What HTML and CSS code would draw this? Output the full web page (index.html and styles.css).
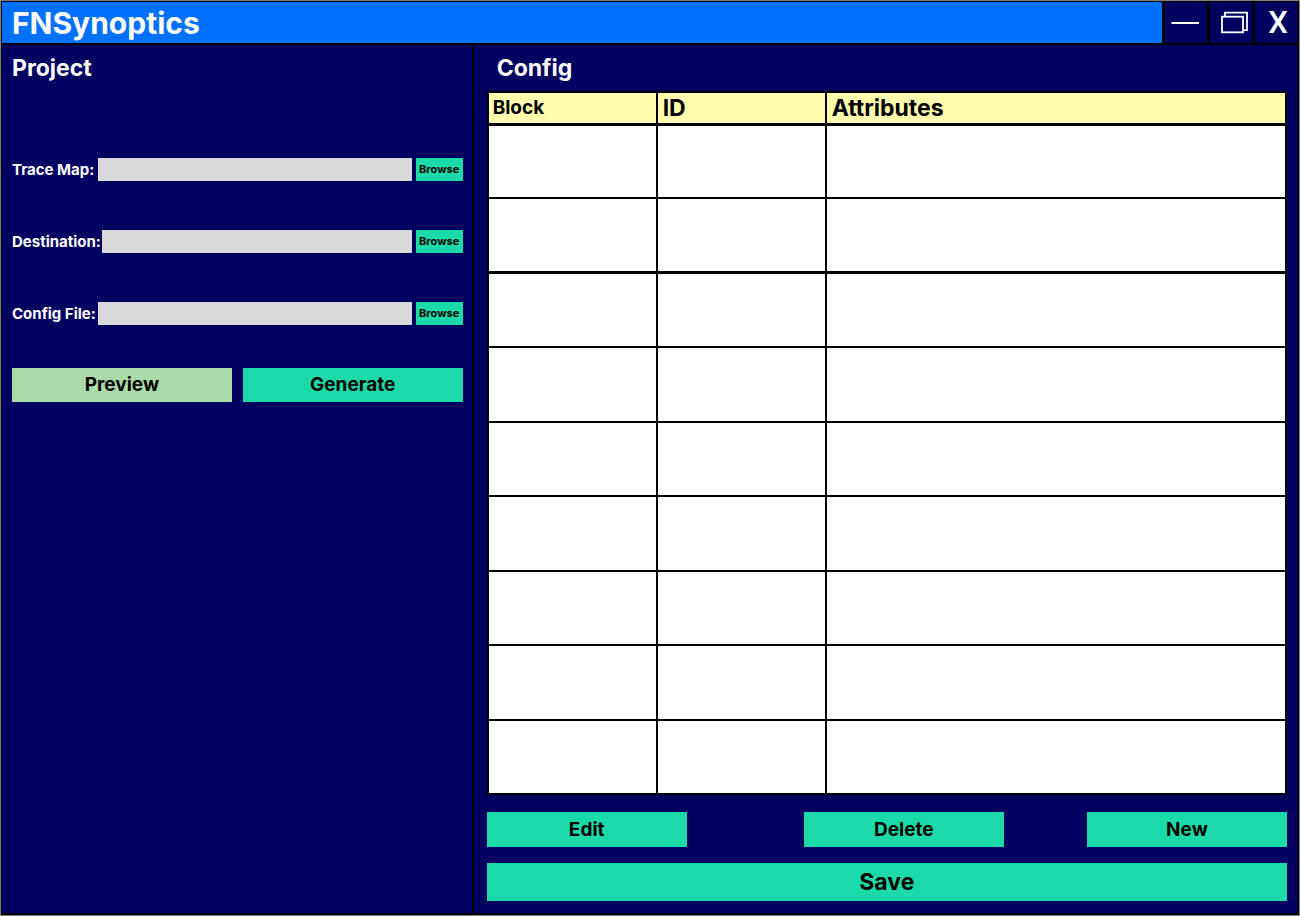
FILE: index.html
```html
<!DOCTYPE html>
<html lang="en">
<head>
<meta charset="utf-8">
<title>FNSynoptics</title>
<link rel="stylesheet" href="styles.css">
</head>
<body>
<div class="window">
  <header class="titlebar">
    <h1 class="app-title">FNSynoptics</h1>
    <button class="win-btn" type="button" aria-label="Minimize">
      <svg width="42" height="42" viewBox="0 0 42 42"><path d="M6.500 21H34" stroke="#fff" stroke-width="2"/></svg>
    </button>
    <button class="win-btn" type="button" aria-label="Restore">
      <svg width="42" height="42" viewBox="0 0 42 42" fill="none" stroke="#fff" stroke-width="1.800"><rect x="12" y="14.700" width="21" height="15.600"/><path d="M15 14.700V10.700H37V28.200H33"/></svg>
    </button>
    <button class="win-btn close" type="button">X</button>
  </header>
  <main class="panes">
    <section class="project">
      <h2 class="heading">Project</h2>
      <form class="form">
        <div class="field">
          <label for="trace">Trace Map:</label>
          <input id="trace" type="text">
          <button class="btn browse" type="button">Browse</button>
        </div>
        <div class="field">
          <label for="dest">Destination:</label>
          <input id="dest" type="text">
          <button class="btn browse" type="button">Browse</button>
        </div>
        <div class="field">
          <label for="config">Config File:</label>
          <input id="config" type="text">
          <button class="btn browse" type="button">Browse</button>
        </div>
        <div class="actions">
          <button class="btn preview" type="button">Preview</button>
          <button class="btn" type="button">Generate</button>
        </div>
      </form>
    </section>
    <section class="config">
      <h2 class="heading config-heading">Config</h2>
      <div class="table-area">
        <table class="blocks">
          <thead><tr><th class="block-col">Block</th><th class="id-col">ID</th><th>Attributes</th></tr></thead>
          <tbody>
            <tr><td></td><td></td><td></td></tr>
            <tr class="current"><td></td><td></td><td></td></tr>
            <tr><td></td><td></td><td></td></tr>
            <tr><td></td><td></td><td></td></tr>
            <tr><td></td><td></td><td></td></tr>
            <tr><td></td><td></td><td></td></tr>
            <tr><td></td><td></td><td></td></tr>
            <tr><td></td><td></td><td></td></tr>
            <tr><td></td><td></td><td></td></tr>
          </tbody>
        </table>
      </div>
      <div class="row-actions">
        <button class="btn edit" type="button">Edit</button>
        <button class="btn delete" type="button">Delete</button>
        <button class="btn new" type="button">New</button>
      </div>
      <button class="btn save" type="button">Save</button>
    </section>
  </main>
</div>
</body>
</html>
```
FILE: styles.css
```css
* {
  box-sizing: border-box;
  font-optical-sizing: none;
}

body {
  margin: 0;
  padding: 1px;
  background: #808080;
  font-family: Inter, "Liberation Sans", sans-serif;
  font-weight: 700;
  color: #fff;
}

.window {
  display: flex;
  flex-direction: column;
  height: calc(100vh - 2px);
  min-height: 600px;
  border: 1px solid #000;
  border-right-width: 2px;
  border-bottom-width: 2px;
  background: #000060;
}

.titlebar {
  display: flex;
  gap: 3px;
  height: 43px;
  flex: none;
  border-bottom: 2px solid #000;
  background: #000;
}

.app-title {
  flex: 1;
  margin: 0;
  padding-left: 10px;
  background: #0070ff;
  font-size: 30px;
  line-height: 43px;
  font-weight: 700;
}

.win-btn {
  width: 42px;
  padding: 0;
  border: 0;
  background: #000060;
  color: #fff;
}

.win-btn svg {
  display: block;
}

.close {
  padding-left: 4px;
  font: 500 31px/42px Roboto, "Liberation Sans", sans-serif;
}

.panes {
  display: grid;
  grid-template-columns: 472fr 824fr;
  flex: 1;
  min-height: 0;
}

.project {
  padding: 8px 9px 0 10px;
  border-right: 2px solid #000;
}

.heading {
  margin: 0;
  font-size: 23px;
  line-height: 30px;
  font-weight: 700;
}

.form {
  padding-top: 75px;
}

.field {
  display: flex;
  align-items: stretch;
  height: 23px;
  margin-bottom: 49px;
}

.field label {
  min-width: 86px;
  padding-right: 1px;
  font-size: 15px;
  line-height: 23px;
}

.field input {
  flex: 1;
  min-width: 0;
  margin-right: 4px;
  padding: 0 4px;
  border: 0;
  border-radius: 0;
  background: #d9d9d9;
}

.btn {
  padding: 0;
  border: 0;
  background: #1adba8;
  color: #000;
  font: 700 19px/34px Inter, "Liberation Sans", sans-serif;
}

.browse {
  width: 47px;
  font-size: 11px;
  line-height: 23px;
}

.actions {
  display: grid;
  grid-template-columns: 1fr 1fr;
  gap: 11px;
  margin-top: -6px;
}

.preview {
  background: #a8dba8;
}

.config {
  display: flex;
  flex-direction: column;
  min-height: 0;
  padding: 8px 10px 12px 13px;
}

.config-heading {
  padding-left: 10px;
}

.table-area {
  flex: 1;
  min-height: 0;
  margin-top: 8px;
}

.blocks {
  width: 100%;
  height: 100%;
  border-collapse: collapse;
  table-layout: fixed;
  background: #fff;
  color: #000;
}

.blocks th,
.blocks td {
  padding: 0;
  border: 2px solid #000;
}

.blocks td {
  height: 11%;
}

.blocks th {
  height: 32px;
  padding-left: 5px;
  border-bottom-width: 3px;
  background: #ffffad;
  text-align: left;
  font-size: 23px;
  line-height: 28px;
  font-weight: 700;
}

.blocks .block-col {
  width: 169px;
  padding-left: 4px;
  font-size: 19px;
}

.blocks .id-col {
  width: 169px;
}

.blocks .current td {
  border-bottom-width: 3px;
}

.row-actions {
  display: flex;
  margin-top: 17px;
}

.row-actions .btn {
  width: 25%;
  line-height: 35px;
}

.row-actions .delete {
  margin-left: 117px;
}

.row-actions .new {
  margin-left: auto;
}

.save {
  margin-top: 16px;
  font-size: 23px;
  line-height: 38px;
}
```
